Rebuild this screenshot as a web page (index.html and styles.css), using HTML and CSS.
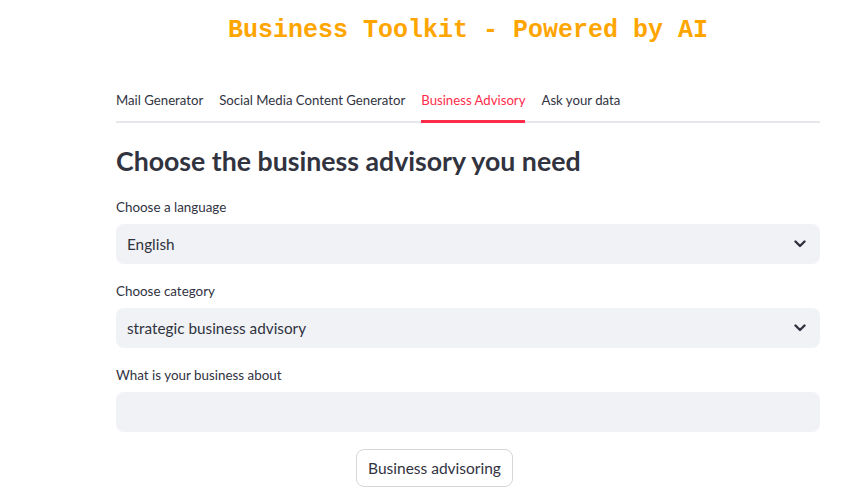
FILE: index.html
```html
<!DOCTYPE html>
<html lang="en">
<head>
<meta charset="utf-8">
<title>Business Toolkit</title>
<link rel="stylesheet" href="styles.css">
</head>
<body>
<main class="main">
  <h1 class="title">Business Toolkit - Powered by AI</h1>
  <nav class="tabs">
    <div class="tab">Mail Generator</div>
    <div class="tab">Social Media Content Generator</div>
    <div class="tab active">Business Advisory</div>
    <div class="tab">Ask your data</div>
  </nav>
  <h2 class="heading">Choose the business advisory you need</h2>
  <div class="field first">
    <label class="label">Choose a language</label>
    <div class="select">
      <span>English</span>
      <svg class="chev" width="12" height="8" viewBox="0 0 12 8"><path d="M1.5 1.5 L6 6 L10.5 1.5" fill="none" stroke="#31333F" stroke-width="2.4" stroke-linecap="round" stroke-linejoin="round"/></svg>
    </div>
  </div>
  <div class="field">
    <label class="label">Choose category</label>
    <div class="select">
      <span>strategic business advisory</span>
      <svg class="chev" width="12" height="8" viewBox="0 0 12 8"><path d="M1.5 1.5 L6 6 L10.5 1.5" fill="none" stroke="#31333F" stroke-width="2.4" stroke-linecap="round" stroke-linejoin="round"/></svg>
    </div>
  </div>
  <div class="field">
    <label class="label">What is your business about</label>
    <div class="input"></div>
  </div>
  <div class="actions">
    <div class="col"></div>
    <div class="col"><button class="btn">Business advisoring</button></div>
    <div class="col"></div>
  </div>
</main>
</body>
</html>
```

FILE: styles.css
```css
* { box-sizing: border-box; }
html, body { margin: 0; padding: 0; background: #ffffff; }
body {
  font-family: "Source Sans Pro", Lato, sans-serif;
  color: #31333F;
}
.main {
  width: 704px;
  margin-left: 116px;
  display: flex;
  flex-direction: column;
}
.title {
  margin: 16px 0 0;
  font-family: "Liberation Mono", "Courier New", monospace;
  font-weight: 700;
  font-size: 25px;
  line-height: 30px;
  color: #FFA500;
  text-align: center;
}
.tabs {
  margin-top: 36px;
  display: flex;
  gap: 16px;
  border-bottom: 2px solid #E6E7EA;
  height: 41px;
}
.tab {
  font-size: 13.2px;
  line-height: 18px;
  padding-top: 9px;
  height: 41px;
  margin-bottom: -2px;
  white-space: nowrap;
}
.tab.active {
  color: #FF2B4B;
  border-bottom: 3px solid #FF2B4B;
}
.heading {
  margin: 21px 0 0;
  font-size: 26.7px;
  line-height: 34px;
  font-weight: 700;
  color: #31333F;
}
.field { display: flex; flex-direction: column; }
.label {
  font-size: 13.4px;
  line-height: 18px;
  margin-top: 18px;
  margin-bottom: 8px;
}
.field.first .label { margin-top: 20px; }
.select, .input {
  height: 40px;
  background: #F0F2F6;
  border-radius: 8px;
  display: flex;
  align-items: center;
  justify-content: space-between;
  padding: 0 14px 0 11px;
  font-size: 15.3px;
}
.chev { display: block; }
.actions {
  display: grid;
  grid-template-columns: 1fr 1fr 1fr;
  gap: 16px;
  margin-top: 17px;
}
.btn {
  font-family: "Source Sans Pro", Lato, sans-serif;
  font-size: 15.5px;
  color: #31333F;
  background: #ffffff;
  border: 1px solid #D6D6D9;
  border-radius: 8px;
  height: 38px;
  width: 157px;
  padding: 0;
}
```
